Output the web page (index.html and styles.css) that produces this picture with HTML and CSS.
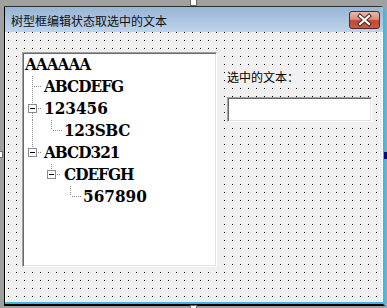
FILE: index.html
```html
<!DOCTYPE html>
<html lang="zh-CN">
<head>
	<meta charset="UTF-8">
	<meta name="viewport" content="width=device-width, initial-scale=1.0">
	<title>树型框编辑状态取选中的文本</title>
	<link rel="stylesheet" href="styles.css">
</head>
<body>

<div class="window">
	<div class="titlebar">
		<span class="title">树型框编辑状态取选中的文本</span>
		<button class="close" title="关闭">
			<svg width="29" height="16" viewBox="0 0 29 16">
				<path d="M10 4L19 12M19 4L10 12" stroke="#4a2a26" stroke-width="4.2" stroke-linecap="square"/>
				<path d="M10 4L19 12M19 4L10 12" stroke="#fff" stroke-width="2.2" stroke-linecap="square"/>
			</svg>
		</button>
	</div>

	<div class="client">
		<div class="tree">
			<div class="node"><span class="text alpha">AAAAAA</span></div>
			<div class="node">
				<svg class="guide" width="19" height="22"><path d="M7.5 0V22M9 10.5H17"/></svg>
				<span class="text alpha">ABCDEFG</span>
			</div>
			<div class="node">
				<svg class="guide" width="19" height="22">
					<path d="M7.5 0V6M7.5 15V22M13 10.5H17"/>
					<rect class="box" x="3.5" y="6.5" width="8" height="8"/>
					<path class="minus" d="M5 10.5H10"/>
				</svg>
				<span class="text">123456</span>
			</div>
			<div class="node">
				<svg class="guide" width="39" height="22"><path d="M7.5 0V22M26.5 0V10M28 10.5H37"/></svg>
				<span class="text mixed">123SBC</span>
			</div>
			<div class="node">
				<svg class="guide" width="19" height="22">
					<path d="M7.5 0V6M13 10.5H17"/>
					<rect class="box" x="3.5" y="6.5" width="8" height="8"/>
					<path class="minus" d="M5 10.5H10"/>
				</svg>
				<span class="text alpha">ABCD321</span>
			</div>
			<div class="node">
				<svg class="guide" width="39" height="22">
					<path d="M26.5 0V6M32 10.5H36"/>
					<rect class="box" x="22.5" y="6.5" width="8" height="8"/>
					<path class="minus" d="M24 10.5H29"/>
				</svg>
				<span class="text alpha">CDEFGH</span>
			</div>
			<div class="node">
				<svg class="guide" width="58" height="22"><path d="M45.5 0V10M47 10.5H56"/></svg>
				<span class="text">567890</span>
			</div>
		</div>

		<div class="side">
			<div class="caption">选中的文本：</div>
			<div class="textbox"></div>
		</div>
	</div>
</div>

<!-- form sizing handles -->
<span class="handle handle-top"></span>
<span class="handle handle-bottom"></span>
<span class="handle handle-left"></span>
<span class="handle handle-right"></span>

</body>
</html>
```

FILE: styles.css
```css
body {
	margin: 0;
	padding-top: 6px;
	height: 302px;
	overflow: hidden;
	position: relative;
	background: #a0a0a0;
	font-family: "Noto Sans CJK SC", "Liberation Sans", sans-serif;
}
.window {
	box-sizing: border-box;
	width: 381px;
	height: 300px;
	margin-left: 4px;
	padding: 0 1px 2px 1px;
	border-left: 1px solid #000;
	border-top: 1px solid #2e2e2e;
	border-right: 2px solid #3cb8e8;
	border-bottom: 2px solid #000;
	border-top-right-radius: 5px;
	background: #fff;
	box-shadow: inset 0 -2px 0 #3cb8e8;
}
.titlebar {
	display: flex;
	justify-content: space-between;
	align-items: flex-start;
	height: 25px;
	margin: 0 -1px;
	border-top-right-radius: 4px;
	background: linear-gradient(#98b3d5, #bed4ec);
}
.title {
	padding: 5px 0 0 6px;
	font-size: 12px;
	line-height: 18px;
	color: #101010;
}
.close {
	width: 31px;
	height: 18px;
	margin: 4px 3px 0 0;
	padding: 0;
	display: flex;
	align-items: center;
	justify-content: center;
	border: 1px solid #5b2620;
	border-radius: 3px;
	background: linear-gradient(#ebb6a9 0%, #dc8f7f 45%, #c2462f 55%, #c95c46 100%);
}
.client {
	display: flex;
	align-items: flex-start;
	height: 270px;
	padding: 20px 0 0 16px;
	box-sizing: border-box;
	background-color: #f0f0f0;
	background-image: conic-gradient(at 1px 1px, transparent 75%, #000 0);
	background-size: 8px 8px;
	background-position: 2px 0;
}
.tree {
	box-sizing: border-box;
	width: 195px;
	height: 215px;
	padding: 1px 0 0 2px;
	border: 1px solid;
	border-color: #a0a0a0 #fff #fff #a0a0a0;
	box-shadow: inset 1px 1px 0 #696969, inset -1px -1px 0 #e3e3e3;
	background: #fff;
}
.node {
	display: flex;
	height: 22px;
}
.guide {
	flex: none;
}
.guide path {
	fill: none;
	stroke: #8a8a8a;
	stroke-width: 1;
	stroke-dasharray: 1 1;
}
.guide .box {
	fill: #fff;
	stroke: #8a8a8a;
}
.guide .minus {
	stroke: #000;
	stroke-dasharray: none;
}
.text {
	font-family: "DejaVu Serif Condensed", "DejaVu Serif", serif;
	font-stretch: condensed;
	font-weight: bold;
	font-size: 17px;
	line-height: 20px;
	color: #000;
	white-space: nowrap;
}
/* letters run wider than digits in this font, the original is fixed-pitch */
.text.alpha {
	letter-spacing: -1px;
}
.text.mixed {
	letter-spacing: -0.4px;
}
.side {
	margin: 16px 0 0 8px;
}
.caption {
	width: 76px;
	height: 18px;
	padding-left: 2px;
	font-size: 12px;
	line-height: 18px;
	color: #000;
	background: #f0f0f0;
}
.textbox {
	box-sizing: border-box;
	width: 145px;
	height: 25px;
	margin: 11px 0 0 2px;
	border: 1px solid;
	border-color: #a0a0a0 #fff #fff #a0a0a0;
	box-shadow: inset 1px 1px 0 #696969, inset -1px -1px 0 #e3e3e3;
	background: #fff;
}
.handle {
	position: absolute;
	width: 5px;
	height: 5px;
	border: 1px solid #6a6a6a;
	background: #fff;
}
.handle-top {
	left: 190px;
	top: -1px;
}
.handle-bottom {
	left: 190px;
	top: 305px;
}
.handle-left {
	left: -4px;
	top: 151px;
}
.handle-right {
	left: 384px;
	top: 152px;
	background: #0a0a80;
	border-color: #0a0a80;
}
```
